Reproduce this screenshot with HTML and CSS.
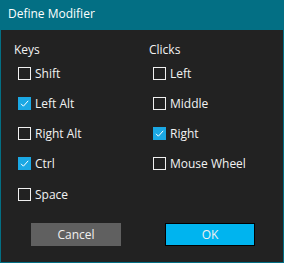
FILE: index.html
```html
<!DOCTYPE html>
<html lang="en">
<head>
    <meta charset="UTF-8">
    <title>Define Modifier</title>
    <link rel="stylesheet" href="styles.css">
</head>
<body>
    <div class="window">
        <div class="title-bar">Define Modifier</div>
        <div class="content">
            <div class="columns">
                <div class="group keys">
                    <div class="group-title">Keys</div>
                    <label class="check"><span class="box"></span>Shift</label>
                    <label class="check"><span class="box checked"><svg viewBox="0 0 13 13"><path d="M3 6.8 L5.4 9.2 L10.2 3.8" /></svg></span>Left Alt</label>
                    <label class="check"><span class="box"></span>Right Alt</label>
                    <label class="check"><span class="box checked"><svg viewBox="0 0 13 13"><path d="M3 6.8 L5.4 9.2 L10.2 3.8" /></svg></span>Ctrl</label>
                    <label class="check"><span class="box"></span>Space</label>
                </div>
                <div class="group clicks">
                    <div class="group-title">Clicks</div>
                    <label class="check"><span class="box"></span>Left</label>
                    <label class="check"><span class="box"></span>Middle</label>
                    <label class="check"><span class="box checked"><svg viewBox="0 0 13 13"><path d="M3 6.8 L5.4 9.2 L10.2 3.8" /></svg></span>Right</label>
                    <label class="check"><span class="box"></span>Mouse Wheel</label>
                </div>
            </div>
            <div class="button-row">
                <button class="cancel-button">Cancel</button>
                <button class="ok-button">OK</button>
            </div>
        </div>
    </div>
</body>
</html>
```

FILE: styles.css
```css
body {
    margin: 0;
    font-family: "Open Sans", "Noto Sans", sans-serif;
    font-size: 12px;
    color: #f2f2f2;
}
.window {
    width: 284px;
    height: 263px;
    box-sizing: border-box;
    background: #222222;
    border: 1px solid #036f84;
    border-top: none;
    display: flex;
    flex-direction: column;
}
.title-bar {
    height: 30px;
    background: #036f84;
    color: white;
    padding-left: 8px;
    line-height: 28px;
    margin: 0 -1px;
}
.content {
    flex: 1;
    display: flex;
    flex-direction: column;
}
.columns {
    display: grid;
    grid-template-columns: 135px 1fr;
    padding-left: 13px;
    padding-top: 12px;
}
.group-title {
    height: 16px;
    line-height: 16px;
    margin-bottom: 7px;
}
.check {
    display: flex;
    align-items: center;
    height: 16px;
    margin-bottom: 14.3px;
    padding-left: 4px;
}
.box {
    width: 11px;
    height: 11px;
    border: 1px solid #f0f0f0;
    margin-right: 4px;
    display: flex;
}
.box.checked {
    background: #1ba8e4;
    border-color: #1ba8e4;
}
.box svg {
    width: 13px;
    height: 13px;
    margin: -1px;
}
.box path {
    fill: none;
    stroke: white;
    stroke-width: 1;
}
.button-row {
    display: flex;
    padding-left: 30px;
    gap: 44px;
    margin-top: 7px;
}
button {
    width: 90px;
    height: 23px;
    border: none;
    font-family: inherit;
    font-size: 12px;
    color: #f0f0f0;
    padding: 0;
}
.cancel-button {
    background-color: #606060;
}
.ok-button {
    background-color: #00b4ef;
    border: 1px solid #000000;
}
```
